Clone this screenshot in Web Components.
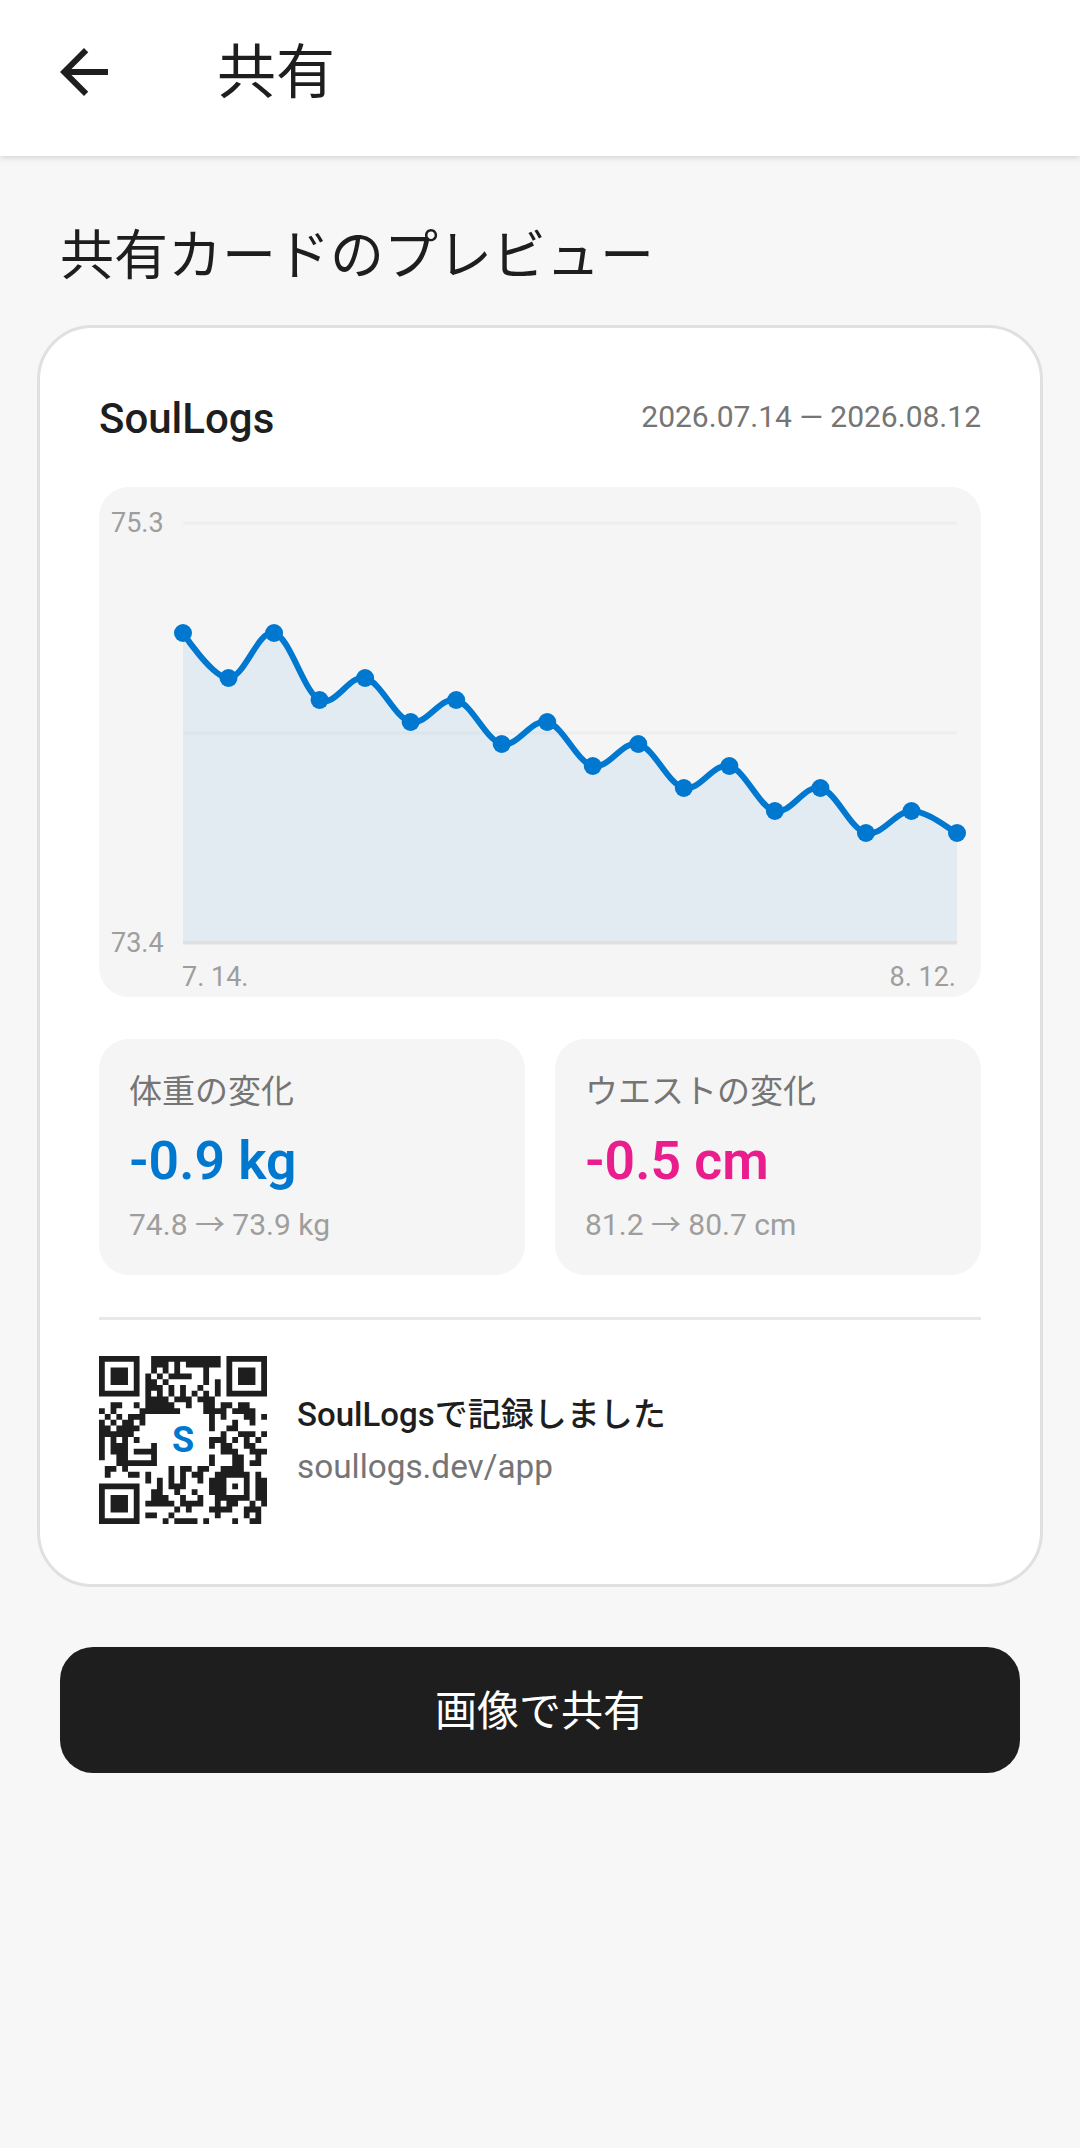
<!DOCTYPE html>
<html lang="ja">
<head>
<meta charset="utf-8">
<title>共有</title>
<style>
  html, body { margin: 0; padding: 0; }
  body {
    background: #f7f7f7;
    min-height: 2148px;
    color: #1e1e1e;
    font-family: Roboto, 'Noto Sans CJK JP', sans-serif;
  }
</style>
</head>
<body>
  <app-bar>共有</app-bar>
  <section-title>共有カードのプレビュー</section-title>
  <share-card>
    <span slot="brand">SoulLogs</span>
    <span slot="range">2026.07.14 — 2026.08.12</span>
    <weight-chart slot="chart"></weight-chart>
    <stat-tile slot="stats" label="体重の変化" value="-0.9 kg" detail="74.8 → 73.9 kg" color="#0078d0"></stat-tile>
    <stat-tile slot="stats" label="ウエストの変化" value="-0.5 cm" detail="81.2 → 80.7 cm" color="#e91e8c"></stat-tile>
    <qr-code slot="qr"></qr-code>
    <span slot="footer-title">SoulLogsで記録しました</span>
    <span slot="footer-link">soullogs.dev/app</span>
  </share-card>
  <share-button>画像で共有</share-button>

<script>
class AppBar extends HTMLElement {
  constructor () {
    super()
    this.shadow = this.attachShadow({ mode: 'open' })
  }

  connectedCallback () {
    this.shadow.innerHTML = /* html */`
      <style>
        :host {
          display: flex;
          align-items: center;
          box-sizing: border-box;
          height: 156px;
          padding: 0 0 12px 48px;
          background: #fff;
          box-shadow: 0 2px 6px rgba(0, 0, 0, 0.14);
          position: relative;
        }
        svg { width: 72px; height: 72px; display: block; fill: #1e1e1e; }
        .title {
          margin-left: 97px;
          padding-top: 2px;
          font-size: 59px;
          line-height: 72px;
          color: #1e1e1e;
        }
      </style>
      <svg viewBox="0 0 24 24"><path d="M20 11H7.83l5.59-5.59L12 4l-8 8 8 8 1.41-1.41L7.83 13H20v-2z"/></svg>
      <div class="title"><slot></slot></div>
    `
  }
}

class SectionTitle extends HTMLElement {
  constructor () {
    super()
    this.shadow = this.attachShadow({ mode: 'open' })
  }

  connectedCallback () {
    this.shadow.innerHTML = /* html */`
      <style>
        :host {
          display: block;
          padding: 65px 60px 32px;
          font-size: 54px;
          line-height: 72px;
          color: #1e1e1e;
        }
      </style>
      <slot></slot>
    `
  }
}

class ShareCard extends HTMLElement {
  constructor () {
    super()
    this.shadow = this.attachShadow({ mode: 'open' })
  }

  connectedCallback () {
    this.shadow.innerHTML = /* html */`
      <style>
        :host {
          display: block;
          box-sizing: border-box;
          margin: 0 37px;
          padding: 60px 59px;
          background: #fff;
          border: 3px solid #e0e0e0;
          border-radius: 55px;
        }
        .head {
          display: flex;
          justify-content: space-between;
          align-items: center;
          height: 62px;
          margin-bottom: 37px;
        }
        .brand { font-size: 42px; font-weight: 500; color: #1e1e1e; margin-bottom: 2px; }
        .range { font-size: 30px; color: #757575; margin-bottom: 5px; }
        .stats {
          display: grid;
          grid-template-columns: 1fr 1fr;
          gap: 30px;
          margin-top: 42px;
        }
        .foot {
          display: flex;
          align-items: center;
          gap: 30px;
          margin-top: 42px;
          padding-top: 36px;
          border-top: 3px solid #e8e8e8;
        }
        .foot-text { display: flex; flex-direction: column; gap: 6px; padding-top: 2px; }
        .foot-title { font-size: 33px; line-height: 46px; font-weight: 500; color: #1e1e1e; }
        .foot-link { font-size: 33.3px; line-height: 46px; color: #757575; }
      </style>
      <div class="head">
        <div class="brand"><slot name="brand"></slot></div>
        <div class="range"><slot name="range"></slot></div>
      </div>
      <slot name="chart"></slot>
      <div class="stats"><slot name="stats"></slot></div>
      <div class="foot">
        <slot name="qr"></slot>
        <div class="foot-text">
          <div class="foot-title"><slot name="footer-title"></slot></div>
          <div class="foot-link"><slot name="footer-link"></slot></div>
        </div>
      </div>
    `
  }
}

class WeightChart extends HTMLElement {
  constructor () {
    super()
    this.shadow = this.attachShadow({ mode: 'open' })
  }

  connectedCallback () {
    const ys = [633, 678, 633, 700, 678, 722, 700, 744, 722, 766, 744, 788, 766, 811, 788, 833, 811, 833]
    const points = ys.map((y, i) => [183 + i * 45.53, y])
    const line = this.curve(points, 0.35)
    const last = points[points.length - 1]
    const dots = points.map(p => `<circle cx="${p[0]}" cy="${p[1]}" r="9"/>`).join('')

    this.shadow.innerHTML = /* html */`
      <style>
        :host {
          display: block;
          position: relative;
          height: 510px;
          background: #f5f5f5;
          border-radius: 30px;
          overflow: hidden;
        }
        svg { display: block; width: 882px; height: 510px; }
        span {
          position: absolute;
          font-size: 27px;
          line-height: 32px;
          color: #9e9e9e;
        }
        .max { left: 12px; top: 20px; }
        .min { left: 12px; top: 440px; }
        .start { left: 83px; top: 474px; }
        .end { right: 25px; top: 474px; }
      </style>
      <svg viewBox="99 487 882 510">
        <g stroke="#eeeeee" stroke-width="3" fill="none">
          <path d="M183 523H957"/>
          <path d="M183 733H957"/>
          <path d="M183 943H957" stroke="#e0e0e0"/>
        </g>
        <path d="${line} L${last[0]} 942 L183 942 Z" fill="#0078d0" fill-opacity="0.07"/>
        <path d="${line}" fill="none" stroke="#0078d0" stroke-width="6" stroke-linecap="round"/>
        <g fill="#0078d0">${dots}</g>
      </svg>
      <span class="max">75.3</span>
      <span class="min">73.4</span>
      <span class="start">7. 14.</span>
      <span class="end">8. 12.</span>
    `
  }

  curve (pts, smooth) {
    let d = `M${pts[0][0]} ${pts[0][1]}`
    let t = [0, 0]
    for (let i = 1; i < pts.length; i++) {
      const prev = pts[i - 1]
      const cur = pts[i]
      const next = pts[i + 1] || cur
      const c1 = [prev[0] + t[0], prev[1] + t[1]]
      t = [(next[0] - prev[0]) / 2 * smooth, (next[1] - prev[1]) / 2 * smooth]
      const c2 = [cur[0] - t[0], cur[1] - t[1]]
      d += ` C${c1[0]} ${c1[1]} ${c2[0]} ${c2[1]} ${cur[0]} ${cur[1]}`
    }
    return d
  }
}

class StatTile extends HTMLElement {
  constructor () {
    super()
    this.shadow = this.attachShadow({ mode: 'open' })
  }

  connectedCallback () {
    this.shadow.innerHTML = /* html */`
      <style>
        :host {
          display: block;
          box-sizing: border-box;
          height: 236px;
          padding: 31px 20px 0 30px;
          background: #f5f5f5;
          border-radius: 30px;
        }
        .label { font-size: 33px; line-height: 44px; color: #757575; }
        .value {
          margin-top: 16px;
          font-size: 53.5px;
          line-height: 62px;
          font-weight: 600;
          color: ${this.getAttribute('color')};
        }
        .detail { margin-top: 14px; font-size: 30px; line-height: 38px; color: #9e9e9e; }
      </style>
      <div class="label">${this.getAttribute('label')}</div>
      <div class="value">${this.getAttribute('value')}</div>
      <div class="detail">${this.getAttribute('detail')}</div>
    `
  }
}

class QrCode extends HTMLElement {
  constructor () {
    super()
    this.shadow = this.attachShadow({ mode: 'open' })
  }

  connectedCallback () {
    const rows = [
      '11111110011111111111101111111',
      '10000010011101011111101000001',
      '10111010010101000010001011101',
      '10111010101011110010001011101',
      '10111010110100000010101011101',
      '10000010111010100100101000001',
      '11111110101010101010101111111',
      '00000000111101110111000000000',
      '00110010111110010011011011000',
      '10100001111111000011110111100',
      '01010111000000000001010001101',
      '10101101000000000001000100100',
      '11011110000000000001001100000',
      '11111100000000000000010011101',
      '10101010000000000001110101010',
      '10111000010000000001011001100',
      '10111011110000000000011100111',
      '10011000010000000001000110010',
      '00011111110000000001000110110',
      '01101000000010110110011110000',
      '01000110100010101100111111010',
      '00000000101010100101110001011',
      '11111110001011100001110101011',
      '10000010011001001001110001011',
      '10111010011100100100111111011',
      '10111010111110111100101100101',
      '10111010000001010001111001110',
      '10000010110010000000100001010',
      '11111110000101111010000100110'
    ]
    let d = ''
    rows.forEach((row, y) => {
      for (let x = 0; x < row.length; x++) {
        if (row[x] === '1') d += `M${x} ${y}h1v1h-1z`
      }
    })

    this.shadow.innerHTML = /* html */`
      <style>
        :host {
          display: block;
          position: relative;
          flex: none;
          width: 168px;
          height: 168px;
        }
        svg { display: block; width: 168px; height: 168px; fill: #1e1e1e; }
        .logo {
          position: absolute;
          left: 58px;
          top: 58px;
          width: 52px;
          height: 52px;
          display: flex;
          align-items: center;
          justify-content: center;
          background: #fff;
          border-radius: 7px;
          color: #0078d0;
          font-size: 36px;
          font-weight: 700;
        }
      </style>
      <svg viewBox="0 0 29 29"><path d="${d}"/></svg>
      <div class="logo">S</div>
    `
  }
}

class ShareButton extends HTMLElement {
  constructor () {
    super()
    this.shadow = this.attachShadow({ mode: 'open' })
  }

  connectedCallback () {
    this.shadow.innerHTML = /* html */`
      <style>
        :host {
          display: flex;
          align-items: center;
          justify-content: center;
          box-sizing: border-box;
          height: 126px;
          margin: 60px 60px 0;
          padding-bottom: 6px;
          background: #1e1e1e;
          border-radius: 33px;
          color: #fff;
          font-size: 42px;
        }
      </style>
      <slot></slot>
    `
  }
}

customElements.define('app-bar', AppBar)
customElements.define('section-title', SectionTitle)
customElements.define('share-card', ShareCard)
customElements.define('weight-chart', WeightChart)
customElements.define('stat-tile', StatTile)
customElements.define('qr-code', QrCode)
customElements.define('share-button', ShareButton)
</script>
</body>
</html>
